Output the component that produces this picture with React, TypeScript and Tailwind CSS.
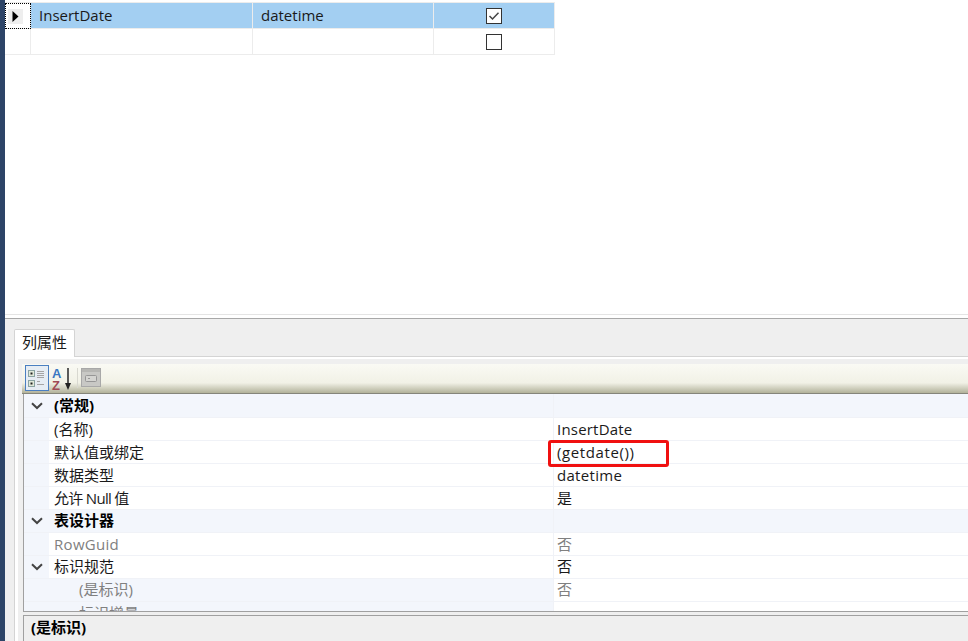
const fontStack = '"Open Sans", "Noto Sans CJK SC", sans-serif';

type PropRow = {
  name: string;
  value?: string;
  kind?: "category" | "group";
  muted?: boolean;
  indent?: boolean;
  lift?: boolean;
  nameClass?: string;
  valueClass?: string;
};

const rows: PropRow[] = [
  { name: "(常规)", kind: "category" },
  { name: "(名称)", value: "InsertDate", valueClass: "tracking-[0.2px]" },
  { name: "默认值或绑定", value: "(getdate())", valueClass: "tracking-[0.6px]" },
  { name: "数据类型", value: "datetime", valueClass: "tracking-[0.3px]" },
  { name: "允许 Null 值", value: "是", nameClass: "tracking-[-0.7px]" },
  { name: "表设计器", kind: "category", lift: true },
  { name: "RowGuid", value: "否", muted: true, nameClass: "tracking-[0.3px]" },
  { name: "标识规范", value: "否", kind: "group", lift: true },
  { name: "(是标识)", value: "否", muted: true, indent: true, lift: true },
  { name: "标识增量", muted: true, indent: true },
];

function CheckBox({ checked }: { checked?: boolean }) {
  return (
    <div className="flex h-4 w-4 items-center justify-center border-[1.5px] border-[#333] bg-white">
      {checked ? (
        <svg width="12" height="10" viewBox="0 0 12 10" fill="none">
          <path d="M1.5 5 L4.5 8 L10.5 1.8" stroke="#444" strokeWidth="1.5" />
        </svg>
      ) : null}
    </div>
  );
}

function ColumnRow({ selected, name, type, checked }: { selected?: boolean; name?: string; type?: string; checked?: boolean }) {
  const fill = selected ? "bg-[#a3cff2]" : "";
  return (
    <div className="flex h-[26px] w-[550px] border-b border-[#ececec] text-[15px] text-[#1a1a1a]">
      <div className="relative w-[26px] shrink-0 border-r border-[#ececec]">
        {selected ? (
          <div className="flex h-[26px] w-[26px] items-center border border-dotted border-black pl-[2px]">
            <div className="flex h-[15px] w-[15px] items-center justify-center bg-[#eeeeee]">
              <svg width="7" height="11" viewBox="0 0 7 11">
                <path d="M0.5 0 L6.5 5.5 L0.5 11 Z" fill="#000" />
              </svg>
            </div>
          </div>
        ) : null}
      </div>
      <div className={`flex w-[222px] shrink-0 items-center border-r border-[#ececec] pl-2 ${fill}`}>{name}</div>
      <div className={`flex w-[181px] shrink-0 items-center border-r border-[#ececec] pl-2 ${fill}`}>{type}</div>
      <div className={`flex w-[121px] shrink-0 items-center justify-center border-r border-[#ececec] ${fill}`}>
        <CheckBox checked={checked} />
      </div>
    </div>
  );
}

function Chevron() {
  return (
    <svg width="12" height="8" viewBox="0 0 12 8" fill="none">
      <path d="M1 1.2 L6 6 L11 1.2" stroke="#444" strokeWidth="2" />
    </svg>
  );
}

function PropertyRow({ row, first }: { row: PropRow; first?: boolean }) {
  const isCategory = row.kind === "category";
  const tone = isCategory ? "font-bold text-black" : row.muted ? "text-[#808080]" : "text-[#1a1a1a]";
  return (
    <div className={`flex shrink-0 border-b border-[#f0f2f7] ${first ? "h-[24px]" : "h-[23px]"} ${isCategory ? "bg-[#f3f6fc]" : "bg-white"}`}>
      <div className="flex w-[25px] shrink-0 items-center justify-center bg-[#f3f6fc]">
        {row.kind ? <Chevron /> : null}
      </div>
      <div
        className={`flex w-[505px] shrink-0 items-center border-r border-[#f0f2f7] text-[15px] leading-none ${row.indent ? "bg-[#f3f6fc] pl-[30px]" : "pl-[5px]"} ${row.lift ? "pb-[2px]" : ""} ${tone} ${row.nameClass ?? ""}`}
      >
        {row.name}
      </div>
      {isCategory ? null : (
        <div className={`flex flex-1 items-center pl-[3px] text-[15px] leading-none ${row.lift ? "pb-[2px]" : ""} ${row.muted ? "text-[#808080]" : "text-[#1a1a1a]"} ${row.valueClass ?? ""}`}>
          {row.value}
        </div>
      )}
    </div>
  );
}

function Toolbar() {
  return (
    <div className="ml-[4px] flex h-[30px] shrink-0 items-start border-b border-[#85857a] bg-gradient-to-b from-[#fafaf4] via-[#f1f1e6] via-65% to-[#b2b29a] pl-[3px] pt-[1px]">
      <div className="flex h-[26px] w-[24px] items-center justify-center border border-[#4a7fc1] bg-[#e6edf4]">
        <svg width="18" height="21" viewBox="0 0 18 21" fill="none">
          <rect x="0.5" y="2.5" width="6" height="6" fill="#dfe8d8" stroke="#8aa3a3" />
          <rect x="2.5" y="4.5" width="2" height="2" fill="#222" />
          <rect x="0.5" y="12.5" width="6" height="6" fill="#dfe8d8" stroke="#8aa3a3" />
          <rect x="2.5" y="14.5" width="2" height="2" fill="#222" />
          <path d="M9 3.5h7M9 5.5h7M9 7.5h7M9 9.5h7M9 13.5h3M9 16.5h7" stroke="#a5a5a5" />
        </svg>
      </div>
      <svg className="ml-[1px] mt-[2px]" width="25" height="25" viewBox="0 0 25 25">
        <text x="2" y="11" fontSize="13" fontWeight="700" fill="#3a78c2" fontFamily="Liberation Sans">A</text>
        <text x="2" y="23" fontSize="13" fontWeight="700" fill="#a04a55" fontFamily="Liberation Sans">Z</text>
        <path d="M18 1V19" stroke="#333" strokeWidth="1.6" />
        <path d="M15 16 L18 23 L21 16 Z" fill="#222" />
      </svg>
      <div className="ml-[2px] mt-[3px] h-[20px] w-px bg-[#d8d8d0]" />
      <svg className="ml-[3px] mt-[3px]" width="20" height="19" viewBox="0 0 20 19" fill="none">
        <rect x="0.5" y="0.5" width="19" height="18" fill="#c8c8c5" stroke="#a8a8a8" />
        <rect x="1" y="1" width="18" height="3" fill="#b6b6b3" />
        <rect x="4.5" y="7.5" width="11" height="6" rx="1" fill="#d4d4d1" stroke="#969696" />
        <path d="M7 10.5h2" stroke="#969696" />
      </svg>
    </div>
  );
}

export default function App() {
  return (
    <div className="relative flex h-[641px] w-[968px] overflow-hidden bg-white" style={{ fontFamily: fontStack }}>
      <div className="w-[5px] shrink-0 bg-[#2d4467]" />
      <div className="flex min-w-0 flex-1 flex-col">
        {/* column grid */}
        <div className="h-[314px] shrink-0 pt-[2px]">
          <div className="w-[550px] border-t border-[#ececec]">
            <ColumnRow selected name="InsertDate" type="datetime" checked />
            <ColumnRow />
          </div>
        </div>
        {/* splitter */}
        <div className="h-[4px] shrink-0 border-t border-[#e4e4e4] bg-white" />
        <div className="flex min-h-0 flex-1 flex-col border-t border-[#a8a8a8] bg-[#efefef] pl-[9px]">
          <div className="flex h-[37px] shrink-0 items-end">
            <div className="relative z-10 -mb-px flex h-[28px] w-[61px] items-center justify-center rounded-t-[2px] border border-b-0 border-[#d4d4d4] bg-white pb-[2px] text-[15px] text-[#1a1a1a]">
              列属性
            </div>
          </div>
          <div className="flex min-h-0 flex-1 flex-col border-l border-t border-[#d4d4d4] bg-white pl-[3px] pt-[2px]">
            <div className="flex min-h-0 flex-1 flex-col bg-[#efefef] pt-[5px]">
              <Toolbar />
              {/* properties */}
              <div className="ml-[5px] h-[218px] shrink-0 overflow-hidden border-b border-l border-[#a0a0a0] bg-[#f3f6fc]">
                {rows.map((row, i) => (
                  <PropertyRow key={row.name} row={row} first={i === 0} />
                ))}
              </div>
              <div className="ml-[5px] mt-[3px] flex min-h-0 flex-1 items-center border-l border-t border-[#a0a0a0] pb-[2px] pl-[7px] text-[15px] font-bold text-black">
                (是标识)
              </div>
            </div>
          </div>
        </div>
      </div>
      {/* red annotation box */}
      <div className="absolute left-[548px] top-[440px] h-[27px] w-[121px] rounded-[3px] border-[3px] border-[#f01010]" />
    </div>
  );
}
